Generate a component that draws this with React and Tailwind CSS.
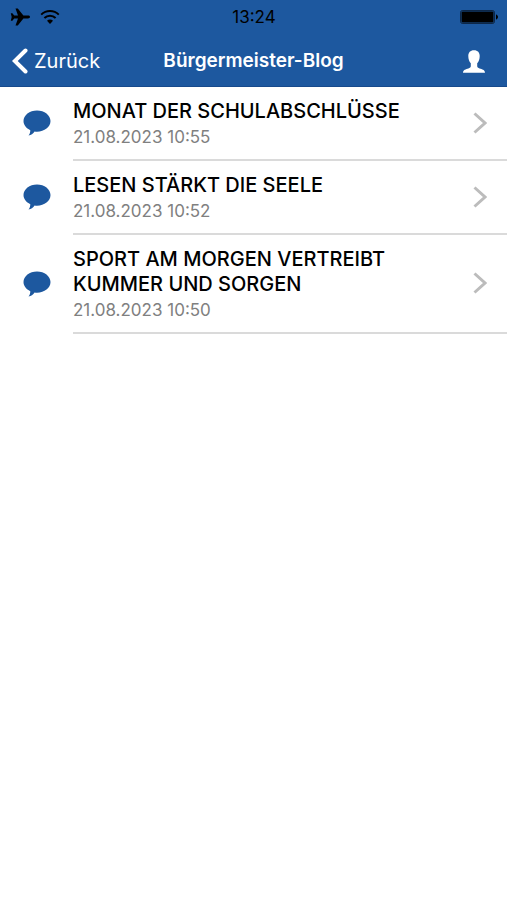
import React from 'react';

const posts = [
  { id: 1, title: 'MONAT DER SCHULABSCHLÜSSE', date: '21.08.2023 10:55' },
  { id: 2, title: 'LESEN STÄRKT DIE SEELE', date: '21.08.2023 10:52' },
  { id: 3, title: 'SPORT AM MORGEN VERTREIBT KUMMER UND SORGEN', date: '21.08.2023 10:50' },
];

const PlaneIcon = () => (
  <svg className="w-5 h-[18px]" viewBox="0 0 20 18" fill="black">
    <path d="M20 9c0-.9-.9-1.400-2-1.400h-4.600L7.800.4H5.500l2.500 7.200H4.200L2.400 5.200H.8L1.700 9l-.9 3.800h1.600l1.800-2.400H8l-2.500 7.200h2.300l5.600-7.200H18c1.100 0 2-.5 2-1.400z" />
  </svg>
);

const WifiIcon = () => (
  <svg className="w-5 h-4" viewBox="0 0 20 16" fill="none" stroke="black" strokeWidth="2">
    <path d="M1.2 5.6a12.6 12.6 0 0 1 17.6 0" />
    <path d="M4.4 9a8 8 0 0 1 11.2 0" />
    <path d="M10 15l-3-3.2a4.2 4.2 0 0 1 6 0z" fill="black" stroke="none" />
  </svg>
);

const BatteryIcon = () => (
  <svg className="w-[38px] h-[14px]" viewBox="0 0 38 14">
    <rect x="0.5" y="0.5" width="34" height="13" rx="2" fill="none" stroke="black" strokeOpacity="0.55" />
    <rect x="1.5" y="1.5" width="32" height="11" rx="1" fill="black" />
    <path d="M36 4.5c1.2.3 2 1.300 2 2.500s-.8 2.200-2 2.500z" fill="black" />
  </svg>
);

const BackIcon = () => (
  <svg className="w-4 h-[26px]" viewBox="0 0 16 26" fill="none" stroke="white" strokeWidth="4">
    <path d="M13.500 2.500L2.800 13l10.700 10.500" strokeLinecap="round" />
  </svg>
);

const PersonIcon = () => (
  <svg className="w-[22px] h-[23px]" viewBox="0 0 22 23" fill="white">
    <path d="M11 .2c3.800 0 5.700 2.300 5.700 5.800 0 3-1 5.800-2.500 7.200v2.900c0 1.400.9 2 2.400 2.500 2.400.8 5.400 1.300 5.400 4.200H0c0-2.900 3-3.400 5.400-4.200 1.500-.5 2.400-1.100 2.400-2.500v-2.900C6.300 11.800 5.300 9 5.300 6 5.300 2.500 7.200.2 11 .2z" />
  </svg>
);

const BubbleIcon = () => (
  <svg className="w-7 h-[26px] mb-[2px]" viewBox="0 0 28 26" fill="#1d589f">
    <path d="M14 .5c7.500 0 13.500 4.700 13.500 10.600S21.500 21.700 14 21.700c-.8 0-1.600 0-2.400-.2-1.600 2.200-3.400 3.600-6.100 4.100 1.200-1.600 1.800-3.300 1.800-5.400C3.200 18.400.5 15 .5 11.100.5 5.200 6.500.5 14 .5z" />
  </svg>
);

const ChevronIcon = () => (
  <svg className="w-[14px] h-[22px] mb-[2px]" viewBox="0 0 14 22" fill="none" stroke="#bcbcbc" strokeWidth="3">
    <path d="M1.500 1.500L12 11 1.500 20.500" />
  </svg>
);

const App = () => {
  return (
    <div className="min-h-screen bg-white font-['Inter','Liberation_Sans',sans-serif]">
      {/* Header */}
      <header className="bg-[#1d589f] border-b border-[#174a8c]">
        <div className="grid grid-cols-3 items-center h-[34px] pl-[10px] pr-[9px]">
          <div className="flex items-center gap-[10px]">
            <PlaneIcon />
            <WifiIcon />
          </div>
          <span className="text-center text-[17px] leading-5 text-black">13:24</span>
          <div className="flex justify-end">
            <BatteryIcon />
          </div>
        </div>

        <nav className="grid grid-cols-[1fr_auto_1fr] items-center h-[52px] pt-[2px] px-3 text-white">
          <button className="flex items-center gap-[6px] justify-self-start text-xl">
            <BackIcon />
            Zurück
          </button>
          <h1 className="text-[19px] font-semibold">Bürgermeister-Blog</h1>
          <button className="justify-self-end pr-[10px]" aria-label="Profil">
            <PersonIcon />
          </button>
        </nav>
      </header>

      {/* Posts */}
      <ul>
        {posts.map((post) => (
          <li key={post.id}>
            <a href="#" className="flex">
              <div className="w-[73px] shrink-0 flex items-center justify-center">
                <BubbleIcon />
              </div>
              <div className="flex-1 flex items-center gap-4 pt-3 pb-[11px] pr-5 border-b-2 border-[#dadada]">
                <div className="flex-1">
                  <h2 className="text-xl leading-[25px] font-medium text-black">{post.title}</h2>
                  <p className="mt-[2px] text-[17px] leading-[22px] text-[#808080]">{post.date}</p>
                </div>
                <ChevronIcon />
              </div>
            </a>
          </li>
        ))}
      </ul>
    </div>
  );
};

export default App;
